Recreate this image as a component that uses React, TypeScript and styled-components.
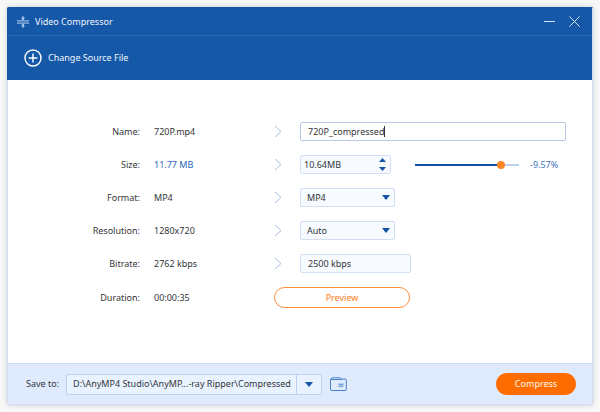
import React, { useState } from "react";
import styled, { createGlobalStyle } from "styled-components";

const FONT = '"Noto Sans", "Open Sans", sans-serif';

const Global = createGlobalStyle`
  *, *::before, *::after { box-sizing: border-box; }
  body {
    margin: 0;
    background: #f8f8f8;
    color: #333539;
    font: 9px/16px ${FONT};
  }
  button, input, select { font: inherit; color: inherit; margin: 0; }
`;

const Page = styled.div`
  min-height: 100vh;
  padding: 7px;
  display: flex;
`;

const Window = styled.main`
  flex: 1;
  min-width: 0;
  display: flex;
  flex-direction: column;
  background: #fff;
  border: 1px solid #d3def0;
  border-top-color: #1658a8;
  border-radius: 0 0 2px 2px;
  box-shadow: 0 0 5px rgba(60, 70, 95, 0.25);
`;

const Header = styled.header`
  background: #1658a8;
  color: #eef5fd;
  margin: 0 0 0 -1px;
`;

const TitleBar = styled.div`
  height: 28px;
  padding: 0 12px 0 10px;
  display: flex;
  align-items: center;
  border-bottom: 1px solid #2c69b3;
`;

const Title = styled.h1`
  margin: 0 auto 0 6px;
  font: inherit;
`;

const WindowButton = styled.button`
  padding: 0;
  margin-left: 14px;
  border: 0;
  background: none;
  display: flex;
`;

const Toolbar = styled.div`
  height: 44px;
  padding: 0 17px;
  display: flex;
  align-items: center;
`;

const SourceButton = styled.button`
  padding: 0;
  border: 0;
  background: none;
  color: inherit;
  display: flex;
  align-items: center;
  gap: 6px;
`;

const Form = styled.form`
  flex: 1;
  padding: 42px 26px 20px 20px;
  display: flex;
  flex-direction: column;
  gap: 14px;
`;

const Row = styled.div`
  min-height: 19px;
  display: grid;
  grid-template-columns: 112px 106px 12px 1fr;
  column-gap: 14px;
  align-items: center;
`;

const Label = styled.label`
  text-align: right;
`;

const Value = styled.span<{ $accent?: boolean }>`
  color: ${(p) => (p.$accent ? "#2c66bb" : "inherit")};
`;

const Controls = styled.div`
  display: flex;
  align-items: center;
`;

const Field = styled.div<{ $width?: number; $active?: boolean; $pad?: number }>`
  height: 19px;
  ${(p) => (p.$width ? `width: ${p.$width}px;` : "flex: 1; min-width: 0;")}
  padding: 0 ${(p) => (p.$active ? 7 : 4)}px 0 ${(p) => p.$pad ?? 7}px;
  display: flex;
  align-items: center;
  border: 1px solid ${(p) => (p.$active ? "#b9c8e8" : "#d3dff5")};
  border-radius: 2px;
  background: ${(p) => (p.$active ? "#fff" : "#f7fbff")};
`;

const TextInput = styled.input<{ $fit?: boolean }>`
  ${(p) => (p.$fit ? "field-sizing: content;" : "flex: 1;")}
  min-width: 0;
  height: 16px;
  padding: 0;
  border: 0;
  outline: 0;
  background: none;
`;

const Caret = styled.span`
  width: 1px;
  height: 11px;
  background: #333;
`;

const Spinner = styled.div`
  display: flex;
  flex-direction: column;
  gap: 5px;
`;

const SpinButton = styled.button`
  padding: 0;
  border: 0;
  background: none;
  display: flex;
`;

const SelectBox = styled.div<{ $footer?: boolean }>`
  display: grid;
  grid-template-columns: 1fr ${(p) => (p.$footer ? 25 : 12)}px;
  width: ${(p) => (p.$footer ? 256 : 95)}px;
  height: ${(p) => (p.$footer ? 21 : 19)}px;
  border: 1px solid ${(p) => (p.$footer ? "#bdd2f3" : "#d3dff5")};
  border-radius: 2px;
  background: ${(p) => (p.$footer ? "#e9f3ff" : "#f7fbff")};

  select {
    grid-area: 1 / 1 / 2 / 3;
    min-width: 0;
    padding: 0 0 0 6px;
    appearance: none;
    border: 0;
    outline: 0;
    background: none;
  }
`;

const SelectArrow = styled.span<{ $divided?: boolean }>`
  grid-area: 1 / 2 / 2 / 3;
  pointer-events: none;
  display: flex;
  align-items: center;
  padding-left: ${(p) => (p.$divided ? 8 : 0)}px;
  border-left: ${(p) => (p.$divided ? "1px solid #bdd2f3" : "0")};
`;

const Slider = styled.input`
  width: 104px;
  height: 8px;
  margin: 0 11px 0 24px;
  appearance: none;
  background: linear-gradient(#1251a6, #1251a6) left center / var(--fill) 2px no-repeat,
    linear-gradient(#b9d0ef, #b9d0ef) left center / 100% 2px no-repeat;

  &::-webkit-slider-thumb {
    appearance: none;
    width: 8px;
    height: 8px;
    border: 0;
    border-radius: 50%;
    background: #ff8426;
  }
`;

const Percent = styled.output`
  color: #3d73c0;
`;

const PreviewButton = styled.button`
  grid-column: 3 / 5;
  width: 136px;
  height: 21px;
  padding: 0;
  border: 1px solid #ff8a3a;
  border-radius: 11px;
  background: #fff;
  color: #ff7d22;
`;

const Footer = styled.footer`
  height: 41px;
  padding: 0 16px 0 18px;
  display: flex;
  align-items: center;
  border-top: 1px solid #cbdaf2;
  background: #dfebfd;
`;

const SaveLabel = styled.label`
  margin-right: 7px;
`;

const FolderButton = styled.button`
  padding: 0;
  margin: 0 auto 0 8px;
  border: 0;
  background: none;
  display: flex;
`;

const CompressButton = styled.button`
  width: 80px;
  height: 22px;
  padding: 0;
  border: 0;
  border-radius: 11px;
  background: #ff6d00;
  color: #fff6ee;
`;

const Triangle = ({ up, small }: { up?: boolean; small?: boolean }) => (
  <svg width={small ? 7 : 8} height={small ? 4 : 5} viewBox="0 0 8 5" preserveAspectRatio="none" aria-hidden>
    <path d={up ? "M0 5h8L4 0z" : "M0 0h8L4 5z"} fill="#1553a7" />
  </svg>
);

const Chevron = () => (
  <svg width="9" height="13" viewBox="0 0 9 13" fill="none" stroke="#a9bde4" aria-hidden>
    <path d="M1 1l6 5.5L1 12" />
  </svg>
);

const CompressorIcon = () => (
  <svg width="12" height="12" viewBox="0 0 12 12" fill="none" stroke="#b9d2f3" aria-hidden>
    <path d="M0 4.9h12M0 7.1h12M6 0v4M6 8v4" />
    <path d="M4 1.8l2 2.4 2-2.4zM4 10.2l2-2.4 2 2.4z" fill="#b9d2f3" stroke="none" />
  </svg>
);

const PlusIcon = () => (
  <svg width="18" height="18" viewBox="0 0 18 18" fill="none" stroke="#fff" strokeWidth="1.4" aria-hidden>
    <circle cx="9" cy="9" r="8" />
    <path d="M9 4.6v8.8M4.6 9h8.8" />
  </svg>
);

const FolderIcon = () => (
  <svg width="17" height="14" viewBox="0 0 17 14" fill="none" stroke="#4681c8" aria-hidden>
    <path d="M.5 12V2.5L2 .8h8.5L11.8 2H15q1.3 0 1.3 1.3v8.9q0 1.3-1.3 1.3H1.8Q.5 13.5.5 12zM1 2.5h11M8.5 7.2h5M8.5 9.2h5" />
  </svg>
);

function Select({ id, options, footer }: { id: string; options: string[]; footer?: boolean }) {
  return (
    <SelectBox $footer={footer}>
      <select id={id}>
        {options.map((o) => (
          <option key={o}>{o}</option>
        ))}
      </select>
      <SelectArrow $divided={footer}>
        <Triangle />
      </SelectArrow>
    </SelectBox>
  );
}

export default function App() {
  const [ratio, setRatio] = useState(85);
  return (
    <>
      <Global />
      <Page>
        <Window>
          <Header>
            <TitleBar>
              <CompressorIcon />
              <Title>Video Compressor</Title>
              <WindowButton type="button" aria-label="Minimize">
                <svg width="11" height="11" viewBox="0 0 11 11" stroke="#d5e4f8" aria-hidden>
                  <path d="M0 5.5h11" />
                </svg>
              </WindowButton>
              <WindowButton type="button" aria-label="Close">
                <svg width="11" height="11" viewBox="0 0 11 11" stroke="#d5e4f8" aria-hidden>
                  <path d="M.5.5l10 10M10.5.5l-10 10" />
                </svg>
              </WindowButton>
            </TitleBar>
            <Toolbar>
              <SourceButton type="button">
                <PlusIcon />
                Change Source File
              </SourceButton>
            </Toolbar>
          </Header>

          <Form onSubmit={(e) => e.preventDefault()}>
            <Row>
              <Label htmlFor="name">Name:</Label>
              <Value>720P.mp4</Value>
              <Chevron />
              <Controls>
                <Field $active>
                  <TextInput $fit id="name" defaultValue="720P_compressed" />
                  <Caret />
                </Field>
              </Controls>
            </Row>
            <Row>
              <Label htmlFor="size">Size:</Label>
              <Value $accent>11.77 MB</Value>
              <Chevron />
              <Controls>
                <Field $width={91} $pad={3}>
                  <TextInput id="size" defaultValue="10.64MB" />
                  <Spinner>
                    <SpinButton type="button" aria-label="Increase size">
                      <Triangle up small />
                    </SpinButton>
                    <SpinButton type="button" aria-label="Decrease size">
                      <Triangle small />
                    </SpinButton>
                  </Spinner>
                </Field>
                <Slider
                  type="range"
                  aria-label="Compression ratio"
                  value={ratio}
                  onChange={(e) => setRatio(Number(e.target.value))}
                  style={{ "--fill": `${ratio}%` } as React.CSSProperties}
                />
                <Percent>-9.57%</Percent>
              </Controls>
            </Row>
            <Row>
              <Label htmlFor="format">Format:</Label>
              <Value>MP4</Value>
              <Chevron />
              <Controls>
                <Select id="format" options={["MP4"]} />
              </Controls>
            </Row>
            <Row>
              <Label htmlFor="resolution">Resolution:</Label>
              <Value>1280x720</Value>
              <Chevron />
              <Controls>
                <Select id="resolution" options={["Auto"]} />
              </Controls>
            </Row>
            <Row>
              <Label htmlFor="bitrate">Bitrate:</Label>
              <Value>2762 kbps</Value>
              <Chevron />
              <Controls>
                <Field $width={111}>
                  <TextInput id="bitrate" defaultValue="2500 kbps" />
                </Field>
              </Controls>
            </Row>
            <Row>
              <Label as="span">Duration:</Label>
              <Value>00:00:35</Value>
              <PreviewButton type="button">Preview</PreviewButton>
            </Row>
          </Form>

          <Footer>
            <SaveLabel htmlFor="save">Save to:</SaveLabel>
            <Select id="save" footer options={["D:\\AnyMP4 Studio\\AnyMP...-ray Ripper\\Compressed"]} />
            <FolderButton type="button" aria-label="Open folder">
              <FolderIcon />
            </FolderButton>
            <CompressButton type="button">Compress</CompressButton>
          </Footer>
        </Window>
      </Page>
    </>
  );
}
